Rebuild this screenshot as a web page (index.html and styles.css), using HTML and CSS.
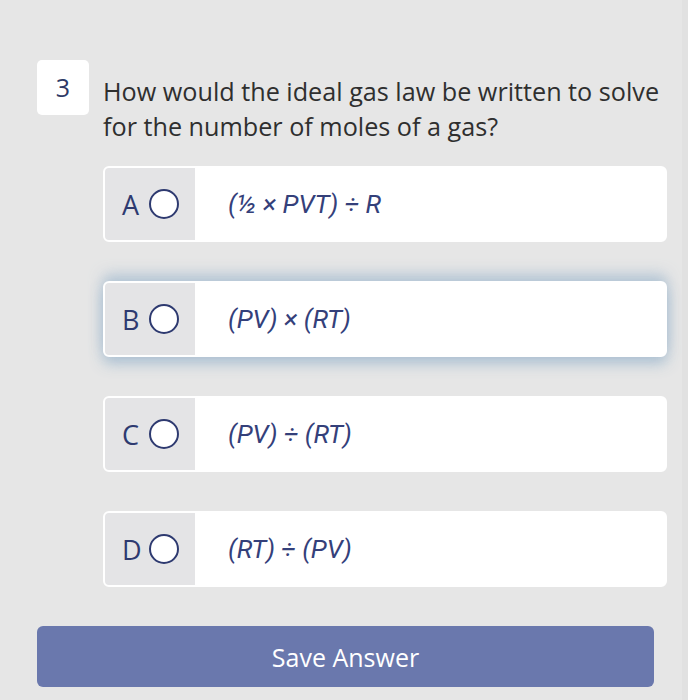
FILE: index.html
```html
<!DOCTYPE html>
<html>
<head>
<meta charset="utf-8">
<link rel="stylesheet" href="styles.css">
</head>
<body>
<div class="page">
  <div class="question">
    <div class="qnum">3</div>
    <div class="qtext">How would the ideal gas law be written to solve for the number of moles of a gas?</div>
  </div>
  <div class="options">
    <div class="option">
      <div class="opt-left"><span class="letter">A</span><span class="radio"></span></div>
      <div class="opt-text">(½ × PVT) ÷ R</div>
    </div>
    <div class="option selected">
      <div class="opt-left"><span class="letter">B</span><span class="radio"></span></div>
      <div class="opt-text">(PV) × (RT)</div>
    </div>
    <div class="option">
      <div class="opt-left"><span class="letter">C</span><span class="radio"></span></div>
      <div class="opt-text">(PV) ÷ (RT)</div>
    </div>
    <div class="option">
      <div class="opt-left"><span class="letter">D</span><span class="radio"></span></div>
      <div class="opt-text">(RT) ÷ (PV)</div>
    </div>
  </div>
  <div class="actions">
    <button class="save">Save Answer</button>
  </div>
</div>
<div class="edge"></div>
</body>
</html>
```
FILE: styles.css
```css
html, body {
  margin: 0;
  padding: 0;
  background: #e6e6e6;
}
body {
  width: 688px;
  height: 700px;
  overflow: hidden;
  position: relative;
  font-family: "Open Sans", "Lato", sans-serif;
}
.edge {
  position: absolute;
  top: 0;
  right: 0;
  width: 6px;
  height: 700px;
  background: #e1e1e1;
}
.page {
  padding: 60px 0 0 37px;
}
.question {
  display: flex;
  align-items: flex-start;
}
.qnum {
  width: 52px;
  height: 55px;
  background: #ffffff;
  border-radius: 5px;
  color: #2e3a66;
  font-size: 25px;
  display: flex;
  align-items: center;
  justify-content: center;
  box-sizing: border-box;
  padding-bottom: 2px;
}
.qtext {
  margin-left: 14px;
  margin-top: 14px;
  width: 575px;
  font-size: 25.2px;
  line-height: 35px;
  color: #2f2f2f;
}
.options {
  margin: 22px 0 0 66px;
  width: 564px;
  display: flex;
  flex-direction: column;
  gap: 39px;
}
.option {
  height: 76px;
  display: flex;
  background: #ffffff;
  border: 2px solid #ffffff;
  border-radius: 6px;
  box-sizing: border-box;
  overflow: hidden;
}
.option.selected {
  box-shadow: 0 -7px 14px rgba(165, 188, 208, 0.75), 0 7px 14px rgba(165, 188, 208, 0.85);
}
.opt-left {
  width: 90px;
  background: #e4e4e6;
  display: flex;
  align-items: center;
  padding-left: 17px;
  box-sizing: border-box;
}
.letter {
  font-size: 27px;
  color: #2e3a70;
  width: 26px;
  line-height: 1;
}
.radio {
  width: 26px;
  height: 26px;
  border: 2px solid #2e3a70;
  border-radius: 50%;
  background: #ffffff;
  margin-left: 1px;
}
.opt-text {
  display: flex;
  align-items: center;
  padding-left: 33px;
  font-family: "Roboto", "Liberation Sans", sans-serif;
  font-style: italic;
  font-weight: 400;
  font-size: 26px;
  color: #34407a;
}
.actions {
  margin-top: 39px;
}
.save {
  width: 617px;
  height: 61px;
  border: none;
  border-radius: 6px;
  background: #6a78ad;
  color: #ffffff;
  font-family: "Open Sans", "Lato", sans-serif;
  font-size: 25px;
  padding: 0;
}
```
